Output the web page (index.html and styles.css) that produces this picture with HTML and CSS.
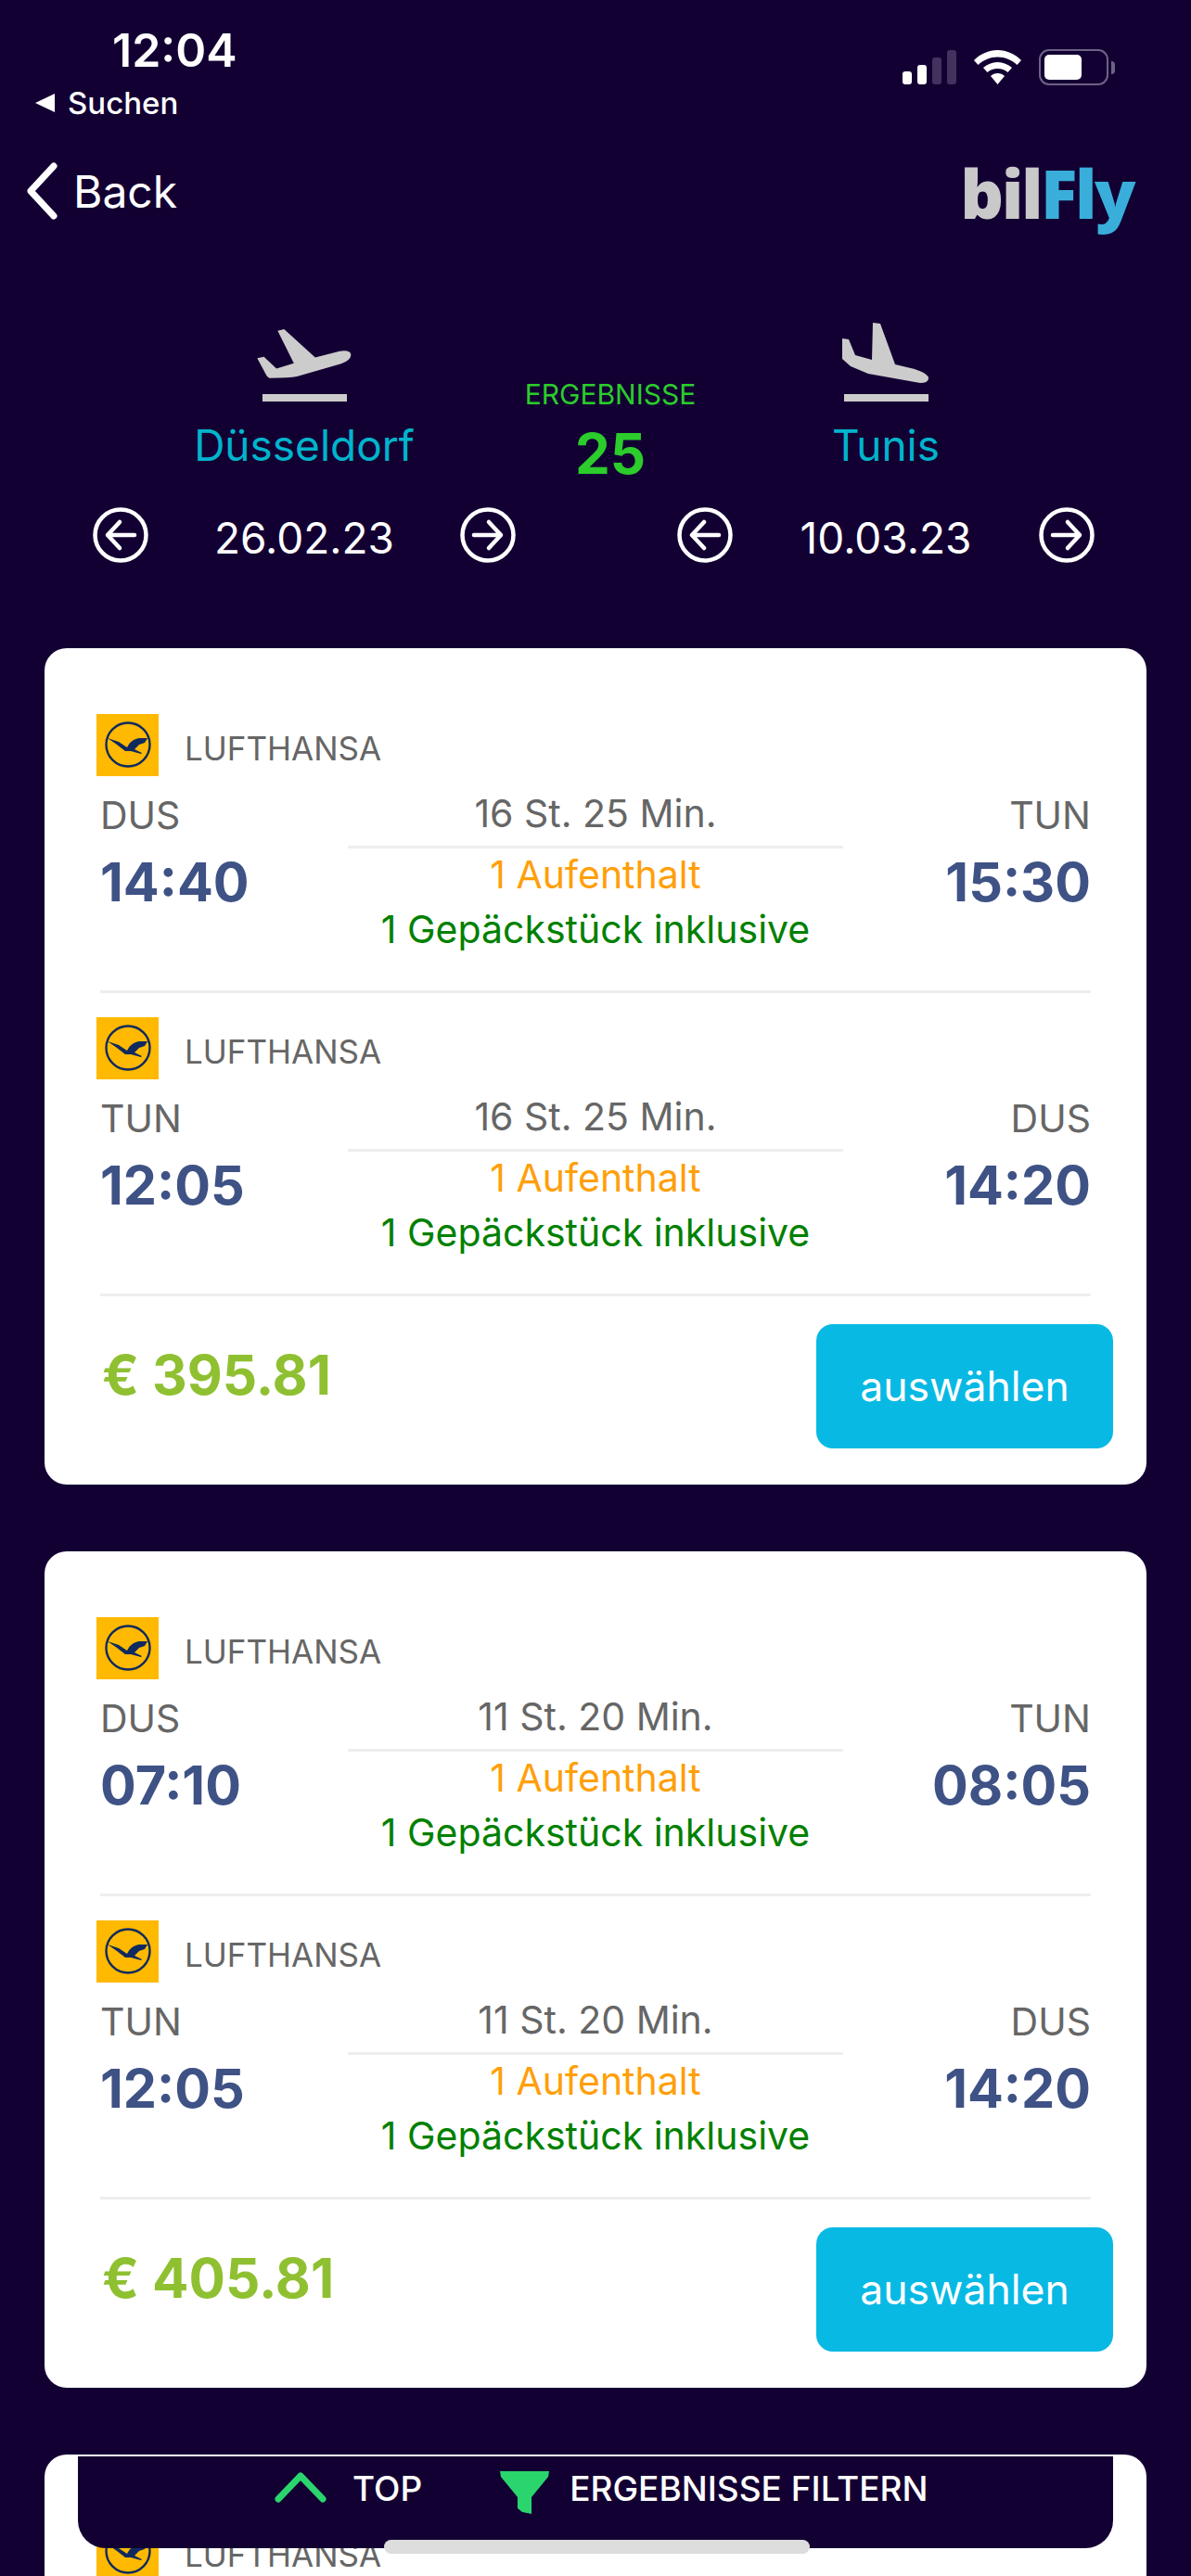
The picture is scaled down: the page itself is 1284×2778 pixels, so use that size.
FILE: index.html
```html
<!DOCTYPE html>
<html lang="de">
<head>
    <meta charset="UTF-8">
    <meta name="viewport" content="width=device-width, initial-scale=1.0">
    <title>bilFly Ergebnisse</title>
    <link rel="stylesheet" href="styles.css">
</head>
<body>
    <svg class="defs" width="0" height="0">
        <symbol id="lh" viewBox="0 0 67 67">
            <rect width="67" height="67" fill="#ffb900"/>
            <circle cx="34" cy="33" r="23.5" fill="none" stroke="#0f2a5e" stroke-width="2.4"/>
            <path d="M12 26 L24 30 L33 36 C36 30 40 27 46 26 L55 26 L52 31 L46 33 L41 38 L49 42 L48 43 L37 40 L31 40 L22 33 Z" fill="#0f2a5e"/>
        </symbol>
        <symbol id="arrow-left" viewBox="0 0 60 60">
            <circle cx="30" cy="30" r="27.5" fill="none" stroke="#fff" stroke-width="4.5"/>
            <path d="M45 30 H16 M29 16 L16 30 L29 44" fill="none" stroke="#fff" stroke-width="4.5" stroke-linecap="round" stroke-linejoin="round"/>
        </symbol>
        <symbol id="arrow-right" viewBox="0 0 60 60">
            <circle cx="30" cy="30" r="27.5" fill="none" stroke="#fff" stroke-width="4.5"/>
            <path d="M15 30 H44 M31 16 L44 30 L31 44" fill="none" stroke="#fff" stroke-width="4.5" stroke-linecap="round" stroke-linejoin="round"/>
        </symbol>
    </svg>

    <div class="status">
        <div class="status-left">
            <div class="clock">12:04</div>
            <div class="back-app"><span class="tri"></span>Suchen</div>
        </div>
        <div class="status-right">
            <div class="signal">
                <span class="b1"></span><span class="b2"></span><span class="b3 off"></span><span class="b4 off"></span>
            </div>
            <svg class="wifi" viewBox="0 0 51 37" width="51" height="37">
                <path d="M25.5 0 C35 0 44 4 51 11 L46.500 16 C40.500 10.500 33.500 7.500 25.500 7.500 C17.500 7.500 10.500 10.500 4.500 16 L0 11 C7 4 16 0 25.500 0 Z" fill="#fff"/>
                <path d="M25.500 13 C31.500 13 36.500 15.500 41 19 L36.500 24 C33.500 21.500 30 20 25.500 20 C21 20 17.500 21.500 14.500 24 L10 19 C14.500 15.500 19.500 13 25.500 13 Z" fill="#fff"/>
                <path d="M25.500 25 C28.500 25 31 26 33 28 L25.500 37 L18 28 C20 26 22.500 25 25.500 25 Z" fill="#fff"/>
            </svg>
            <div class="battery"><div class="battery-fill"></div></div>
            <div class="battery-nub"></div>
        </div>
    </div>

    <div class="nav">
        <div class="back">
            <svg viewBox="0 0 34 62" width="34" height="62"><path d="M30 4 L5 31 L30 58" fill="none" stroke="#fff" stroke-width="7" stroke-linecap="round" stroke-linejoin="round"/></svg>
            <span>Back</span>
        </div>
        <div class="logo"><span class="logo-bil">bil</span><span class="logo-fly">Fly</span></div>
    </div>

    <div class="summary">
        <div class="side side-from">
            <div class="plane-box">
                <svg class="plane plane-up" viewBox="110 75 308 161" width="102" height="53">
                    <path d="M177 80 L198 75 L300 168 L380 147 Q417 142 417 160 Q415 178 385 188 L240 230 Q215 235 150 235 Q142 232 138 222 L110 170 L132 165 L173 204 L230 187 Z" fill="#cccccc"/>
                </svg>
                <div class="plane-bar"></div>
            </div>
            <div class="city">Düsseldorf</div>
            <div class="date-row">
                <svg class="round-arrow"><use href="#arrow-left"/></svg>
                <span class="date">26.02.23</span>
                <svg class="round-arrow"><use href="#arrow-right"/></svg>
            </div>
        </div>
        <div class="results">
            <div class="results-label">ERGEBNISSE</div>
            <div class="results-count">25</div>
        </div>
        <div class="side side-to">
            <div class="plane-box">
                <svg class="plane plane-down" viewBox="908 348 95 65" width="95" height="65">
                    <path d="M941 348 L949 349 L965 393 L986 398 Q1001 403 1001 408 Q1001 413 992 413 L936 403 L917 395 L908 387 L908 365 L915 366 L922 383 L940 388 Z" fill="#cccccc"/>
                </svg>
                <div class="plane-bar"></div>
            </div>
            <div class="city">Tunis</div>
            <div class="date-row">
                <svg class="round-arrow"><use href="#arrow-left"/></svg>
                <span class="date">10.03.23</span>
                <svg class="round-arrow"><use href="#arrow-right"/></svg>
            </div>
        </div>
    </div>

    <div class="list">
        <div class="card">
            <div class="leg">
                <div class="airline"><svg class="airline-logo"><use href="#lh"/></svg><span>LUFTHANSA</span></div>
                <div class="times">
                    <div class="point"><div class="code">DUS</div><div class="time">14:40</div></div>
                    <div class="middle">
                        <div class="duration">16 St. 25 Min.</div>
                        <div class="stops">1 Aufenthalt</div>
                        <div class="bags">1 Gepäckstück inklusive</div>
                    </div>
                    <div class="point point-end"><div class="code">TUN</div><div class="time">15:30</div></div>
                </div>
            </div>
            <div class="leg">
                <div class="airline"><svg class="airline-logo"><use href="#lh"/></svg><span>LUFTHANSA</span></div>
                <div class="times">
                    <div class="point"><div class="code">TUN</div><div class="time">12:05</div></div>
                    <div class="middle">
                        <div class="duration">16 St. 25 Min.</div>
                        <div class="stops">1 Aufenthalt</div>
                        <div class="bags">1 Gepäckstück inklusive</div>
                    </div>
                    <div class="point point-end"><div class="code">DUS</div><div class="time">14:20</div></div>
                </div>
            </div>
            <div class="card-foot">
                <div class="price">€ 395.81</div>
                <button class="select">auswählen</button>
            </div>
        </div>

        <div class="card">
            <div class="leg">
                <div class="airline"><svg class="airline-logo"><use href="#lh"/></svg><span>LUFTHANSA</span></div>
                <div class="times">
                    <div class="point"><div class="code">DUS</div><div class="time">07:10</div></div>
                    <div class="middle">
                        <div class="duration">11 St. 20 Min.</div>
                        <div class="stops">1 Aufenthalt</div>
                        <div class="bags">1 Gepäckstück inklusive</div>
                    </div>
                    <div class="point point-end"><div class="code">TUN</div><div class="time">08:05</div></div>
                </div>
            </div>
            <div class="leg">
                <div class="airline"><svg class="airline-logo"><use href="#lh"/></svg><span>LUFTHANSA</span></div>
                <div class="times">
                    <div class="point"><div class="code">TUN</div><div class="time">12:05</div></div>
                    <div class="middle">
                        <div class="duration">11 St. 20 Min.</div>
                        <div class="stops">1 Aufenthalt</div>
                        <div class="bags">1 Gepäckstück inklusive</div>
                    </div>
                    <div class="point point-end"><div class="code">DUS</div><div class="time">14:20</div></div>
                </div>
            </div>
            <div class="card-foot">
                <div class="price">€ 405.81</div>
                <button class="select">auswählen</button>
            </div>
        </div>

        <div class="card">
            <div class="leg">
                <div class="airline"><svg class="airline-logo"><use href="#lh"/></svg><span>LUFTHANSA</span></div>
            </div>
        </div>
    </div>

    <div class="toolbar">
        <div class="tool tool-top">
            <svg viewBox="0 0 56 34" width="56" height="34"><path d="M4 29 L28 4 L52 29" fill="none" stroke="#2ad56e" stroke-width="7" stroke-linecap="round" stroke-linejoin="round"/></svg>
            <span>TOP</span>
        </div>
        <div class="tool tool-filter">
            <svg viewBox="0 0 53 46" width="53" height="46"><path d="M0 0 H53 L52 6 L34 28 V46 L24 44 L19 40 V28 L1 6 Z" fill="#2ad56e"/></svg>
            <span>ERGEBNISSE FILTERN</span>
        </div>
    </div>
    <div class="home-bar"></div>
</body>
</html>
```

FILE: styles.css
```css
html, body {
    margin: 0;
    height: 2778px;
    overflow: hidden;
}
body {
    position: relative;
    background-color: #130033;
    font-family: Inter, "Liberation Sans", sans-serif;
    color: #fff;
}
.defs {
    position: absolute;
}

/* status bar */
.status {
    display: flex;
    justify-content: space-between;
    height: 131px;
}
.status-left {
    padding-left: 38px;
}
.clock {
    margin-top: 24px;
    margin-left: 83px;
    font-size: 50px;
    line-height: 60px;
    font-weight: 600;
}
.back-app {
    display: flex;
    align-items: center;
    margin-top: 7px;
    font-size: 33px;
    line-height: 40px;
    font-weight: 500;
}
.tri {
    width: 0;
    height: 0;
    margin-right: 14px;
    border-top: 10px solid transparent;
    border-bottom: 10px solid transparent;
    border-right: 21px solid #fff;
}
.status-right {
    display: flex;
    align-items: center;
    align-self: flex-start;
    margin-top: 53px;
    padding-right: 82px;
    height: 39px;
}
.signal {
    display: flex;
    align-items: flex-end;
    gap: 6px;
    height: 37px;
    margin-right: 19px;
}
.signal span {
    width: 10px;
    border-radius: 3px;
    background: #fff;
}
.signal .off {
    background: #42325f;
}
.b1 { height: 14px; }
.b2 { height: 21px; }
.b3 { height: 29px; }
.b4 { height: 37px; }
.battery {
    box-sizing: border-box;
    width: 75px;
    height: 39px;
    margin-left: 19px;
    padding: 4px;
    border: 2px solid #6e6285;
    border-radius: 11px;
}
.battery-fill {
    width: 40px;
    height: 27px;
    border-radius: 5px;
    background: #fff;
}
.battery-nub {
    width: 4px;
    height: 14px;
    margin-left: 3px;
    border-radius: 0 4px 4px 0;
    background: #6e6285;
}

/* back + logo */
.nav {
    display: flex;
    justify-content: space-between;
    align-items: center;
    height: 150px;
    padding: 0 62px 0 28px;
}
.back {
    display: flex;
    align-items: center;
    gap: 17px;
    font-size: 48px;
}
.logo {
    margin-top: 4px;
    font-family: "Open Sans", sans-serif;
    font-size: 73px;
    line-height: 84px;
    font-weight: 800;
    letter-spacing: -2.5px;
}
.logo-bil { color: #c9c9c9; }
.logo-fly { color: #3aaedb; }

/* search summary */
.summary {
    display: flex;
    margin-top: 67px;
    padding-left: 100px;
}
.side {
    display: flex;
    flex-direction: column;
    align-items: center;
}
.side-from { width: 456px; }
.side-to { width: 450px; }
.plane-box {
    display: flex;
    flex-direction: column;
    align-items: center;
    justify-content: flex-end;
    height: 85px;
}
.plane {
    display: block;
}
.plane-up {
    margin-bottom: 17px;
}
.plane-down {
    margin-bottom: 12px;
}
.plane-bar {
    width: 91px;
    height: 8px;
    background: #cccccc;
}
.city {
    margin-top: 19px;
    font-size: 46px;
    line-height: 56px;
    color: #00b4cc;
}
.date-row {
    display: flex;
    justify-content: space-between;
    align-items: center;
    align-self: stretch;
    margin-top: 39px;
}
.round-arrow {
    width: 60px;
    height: 60px;
}
.date {
    margin-top: 6px;
    font-size: 46px;
    line-height: 54px;
}
.results {
    width: 204px;
    margin-right: -30px;
    text-align: center;
}
.results-label {
    margin-top: 60px;
    font-size: 30px;
    line-height: 34px;
    color: #2bcc2b;
}
.results-count {
    margin-top: 17px;
    font-size: 60px;
    line-height: 60px;
    font-weight: 700;
    color: #2bcc2b;
}

/* cards */
.list {
    padding: 92px 48px 0;
}
.card {
    margin-bottom: 72px;
    padding: 71px 60px 39px;
    border-radius: 24px;
    background: #fff;
    color: #666;
}
.leg {
    padding-bottom: 42px;
    margin-bottom: 26px;
    border-bottom: 3px solid #eeeeee;
}
.card:last-child .leg {
    border: 0;
}
.airline {
    display: flex;
    align-items: center;
    gap: 28px;
    margin-left: -4px;
    font-size: 35px;
    font-weight: 400;
}
.airline span {
    padding-top: 6px;
}
.airline-logo {
    width: 67px;
    height: 67px;
}
.times {
    display: grid;
    grid-template-columns: 1fr 534px 1fr;
    margin-top: 16px;
}
.point {
    padding-top: 2px;
}
.point-end {
    text-align: right;
}
.code {
    font-size: 41px;
    line-height: 48px;
}
.time {
    margin-top: 16px;
    font-size: 57.5px;
    line-height: 64px;
    font-weight: 700;
    color: #3f5285;
}
.middle {
    font-size: 41px;
    line-height: 48px;
    text-align: center;
}
.duration {
    padding-bottom: 11px;
    border-bottom: 3px solid #eeeeee;
}
.stops {
    margin-top: 4px;
    color: #ff9f0a;
}
.bags {
    margin-top: 11px;
    white-space: nowrap;
    color: #008000;
}
.card-foot {
    display: flex;
    justify-content: space-between;
    align-items: center;
    margin-top: 30px;
    margin-right: -24px;
}
.price {
    margin: 0 0 24px 2px;
    font-size: 58.5px;
    line-height: 64px;
    font-weight: 700;
    color: #8fc031;
}
.select {
    width: 320px;
    height: 134px;
    padding: 0;
    border: 0;
    border-radius: 18px;
    background-color: #08b9e4;
    font-family: inherit;
    font-size: 44.5px;
    color: #fff;
}

/* floating toolbar */
.toolbar {
    position: absolute;
    left: 84px;
    top: 2649px;
    box-sizing: border-box;
    display: flex;
    width: 1116px;
    height: 99px;
    padding-left: 212px;
    border-radius: 0 0 30px 30px;
    background: #130033;
    font-size: 37px;
    font-weight: 500;
}
.tool {
    display: flex;
    align-items: center;
    height: 68px;
}
.tool-top {
    gap: 28px;
}
.tool-filter {
    gap: 22px;
    margin-left: 84px;
}
.tool svg {
    display: block;
}
.tool-filter svg {
    margin-top: 10px;
}
.home-bar {
    position: absolute;
    left: 414px;
    top: 2739px;
    width: 459px;
    height: 15px;
    border-radius: 8px;
    background: #dddddd;
}
```
